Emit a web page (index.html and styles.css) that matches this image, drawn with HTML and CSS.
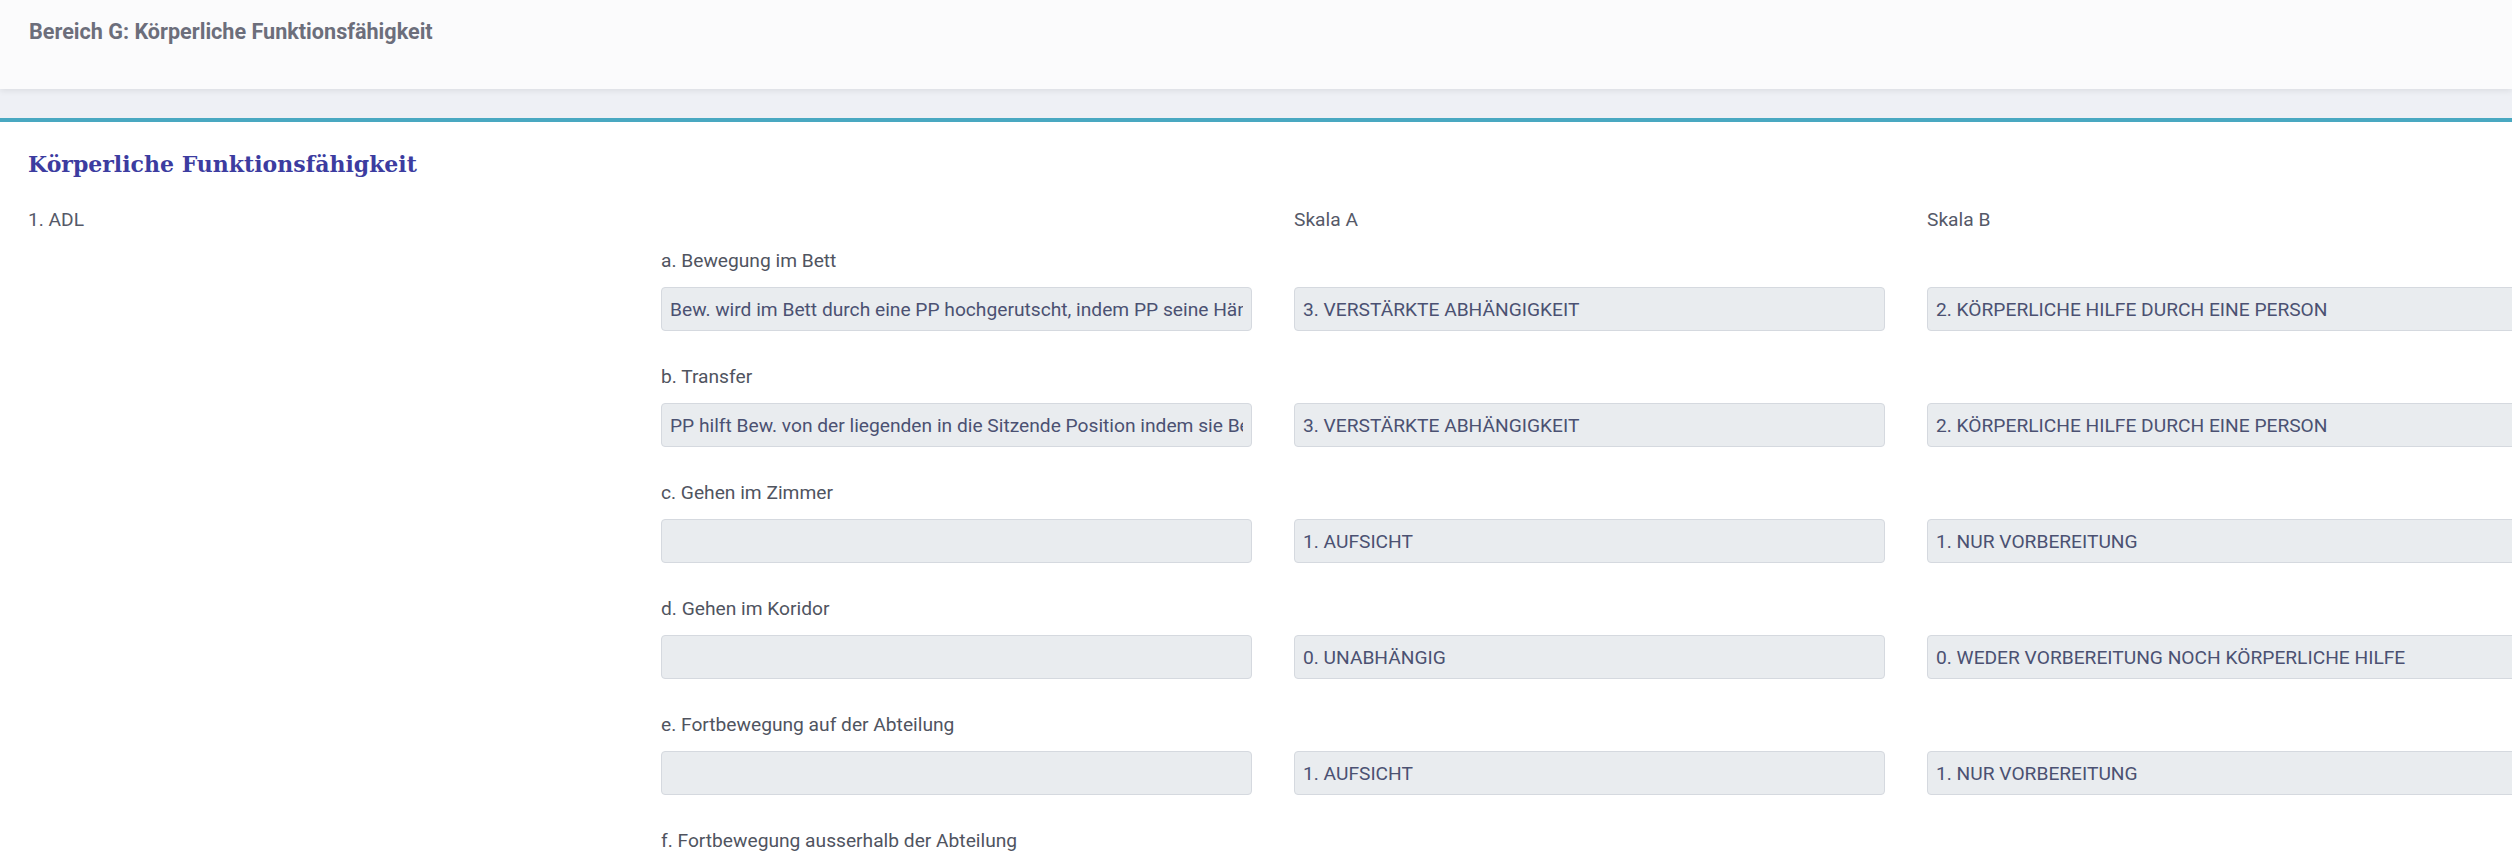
FILE: index.html
```html
<!DOCTYPE html>
<html lang="de">
<head>
    <meta charset="UTF-8">
    <meta name="viewport" content="width=device-width, initial-scale=1.0">
    <title>Bereich G: Körperliche Funktionsfähigkeit</title>
    <link rel="stylesheet" href="styles.css">
</head>
<body>

<div class="page-header">
    <span class="page-title">Bereich G: Körperliche Funktionsfähigkeit</span>
</div>

<div class="card">
    <h2 class="card-title">Körperliche Funktionsfähigkeit</h2>

    <div class="adl-head">
        <div>1. ADL</div>
        <div></div>
        <div>Skala A</div>
        <div>Skala B</div>
    </div>

    <div class="item">
        <div class="item-label">a. Bewegung im Bett</div>
        <input class="field field-text" type="text" readonly value="Bew. wird im Bett durch eine PP hochgerutscht, indem PP seine Hände unter die Achseln von Bew. legt">
        <input class="field" type="text" readonly value="3. VERSTÄRKTE ABHÄNGIGKEIT">
        <input class="field" type="text" readonly value="2. KÖRPERLICHE HILFE DURCH EINE PERSON">
    </div>

    <div class="item">
        <div class="item-label">b. Transfer</div>
        <input class="field field-text" type="text" readonly value="PP hilft Bew. von der liegenden in die Sitzende Position indem sie Bew. am Rücken stützt">
        <input class="field" type="text" readonly value="3. VERSTÄRKTE ABHÄNGIGKEIT">
        <input class="field" type="text" readonly value="2. KÖRPERLICHE HILFE DURCH EINE PERSON">
    </div>

    <div class="item">
        <div class="item-label">c. Gehen im Zimmer</div>
        <input class="field field-text" type="text" readonly value="">
        <input class="field" type="text" readonly value="1. AUFSICHT">
        <input class="field" type="text" readonly value="1. NUR VORBEREITUNG">
    </div>

    <div class="item">
        <div class="item-label">d. Gehen im Koridor</div>
        <input class="field field-text" type="text" readonly value="">
        <input class="field" type="text" readonly value="0. UNABHÄNGIG">
        <input class="field" type="text" readonly value="0. WEDER VORBEREITUNG NOCH KÖRPERLICHE HILFE">
    </div>

    <div class="item">
        <div class="item-label">e. Fortbewegung auf der Abteilung</div>
        <input class="field field-text" type="text" readonly value="">
        <input class="field" type="text" readonly value="1. AUFSICHT">
        <input class="field" type="text" readonly value="1. NUR VORBEREITUNG">
    </div>

    <div class="item">
        <div class="item-label">f. Fortbewegung ausserhalb der Abteilung</div>
    </div>
</div>

</body>
</html>
```

FILE: styles.css
```css
html, body {
    overflow: hidden;
}
body {
    margin: 0;
    padding: 0;
    background-color: #eef0f5;
    font-family: Roboto, "Liberation Sans", sans-serif;
    font-size: 19.2px;
    color: #52566a;
}
.page-header {
    height: 89px;
    box-sizing: border-box;
    padding: 20px 29px 0;
    background-color: #fbfbfc;
    box-shadow: 0 2px 6px rgba(0, 0, 0, 0.08);
}
.page-title {
    font-size: 21.6px;
    line-height: 24px;
    font-weight: 700;
    color: #6c6e7b;
}
.card {
    margin-top: 29px;
    border-top: 4px solid #49a8c1;
    background-color: #fff;
    padding: 27px 0 0 28px;
    overflow: hidden;
}
.card-title {
    margin: 0 0 26px;
    font-family: "DejaVu Serif", "Liberation Serif", serif;
    font-size: 22px;
    line-height: 30px;
    font-weight: bold;
    color: #3c3ca0;
}
.adl-head, .item {
    display: grid;
    grid-template-columns: repeat(4, 591px);
    column-gap: 42px;
    line-height: 29px;
}
.adl-head {
    color: #555968;
}
.item {
    row-gap: 12px;
    margin-top: 12px;
    margin-bottom: 31px;
}
.item + .item {
    margin-top: 0;
}
.item-label {
    grid-column: 2 / span 3;
    color: #50545f;
}
.field {
    height: 44px;
    box-sizing: border-box;
    padding: 0 8px;
    margin: 0;
    border: 1px solid #d5d9df;
    border-radius: 4px;
    background-color: #e9ecef;
    font-family: Roboto, "Liberation Sans", sans-serif;
    font-size: 19.2px;
    color: #4b5172;
    outline: none;
}
.field-text {
    grid-column-start: 2;
}
```
